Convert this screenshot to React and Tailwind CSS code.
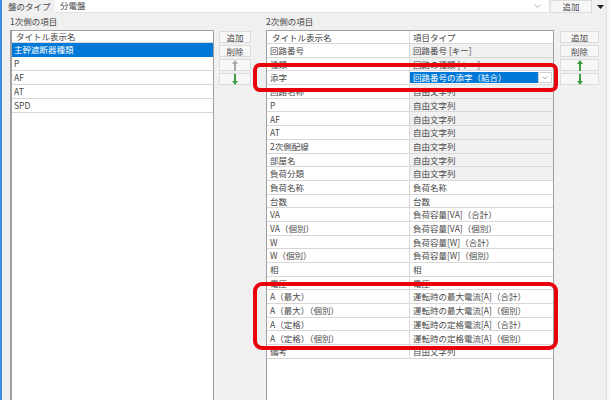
import React from 'react';

const leftRows = ['主幹遮断器種類', 'P', 'AF', 'AT', 'SPD'];

const rightRows = [
  { name: '回路番号', type: '回路番号 [キー]', gray: true },
  { name: '種類', type: '回路の種類 [キー]', gray: true },
  { name: '添字', combo: '回路番号の添字（結合）' },
  { name: '回路名称', type: '自由文字列', gray: true },
  { name: 'P', type: '自由文字列', gray: true },
  { name: 'AF', type: '自由文字列', gray: true },
  { name: 'AT', type: '自由文字列', gray: true },
  { name: '2次側配線', type: '自由文字列', gray: true },
  { name: '部屋名', type: '自由文字列', gray: true },
  { name: '負荷分類', type: '自由文字列', gray: true },
  { name: '負荷名称', type: '負荷名称' },
  { name: '台数', type: '台数' },
  { name: 'VA', type: '負荷容量[VA]（合計）' },
  { name: 'VA（個別）', type: '負荷容量[VA]（個別）' },
  { name: 'W', type: '負荷容量[W]（合計）' },
  { name: 'W（個別）', type: '負荷容量[W]（個別）' },
  { name: '相', type: '相' },
  { name: '電圧', type: '電圧' },
  { name: 'A（最大）', type: '運転時の最大電流[A]（合計）' },
  { name: 'A（最大）（個別）', type: '運転時の最大電流[A]（個別）' },
  { name: 'A（定格）', type: '運転時の定格電流[A]（合計）' },
  { name: 'A（定格）（個別）', type: '運転時の定格電流[A]（個別）' },
  { name: '備考', type: '自由文字列' },
];

const Arrow = ({ down, green }) => (
  <svg width="6" height="11" viewBox="0 0 6 11" className={down ? 'rotate-180' : ''}>
    <path d="M3 0 L6 4 H4 V11 H2 V4 H0 Z" className={green ? 'fill-[#3f9b3f]' : 'fill-[#a8a8a8]'} />
  </svg>
);

const Btn = ({ children }) => (
  <div className="flex h-[12px] items-center justify-center border border-[#dcdcdc] bg-[#f7f7f7]">
    {children}
  </div>
);

export default function App() {
  return (
    <div className="relative h-[400px] w-[610px] overflow-hidden border-l-2 border-[#3b8ee5] bg-[#f0f0f0] font-['Noto_Sans_CJK_JP',sans-serif] text-[8.5px] leading-none text-[#484848]">
      {/* top: panel type */}
      <div className="flex h-[13px] items-center">
        <span className="w-[53px] pl-[6px]">盤のタイプ</span>
        <div className="-mt-[1px] flex h-[13px] w-[493px] items-center border-b border-[#e2e2e2] bg-white">
          <span className="flex-1 pl-[5px]">分電盤</span>
          <svg width="7" height="4" viewBox="0 0 7 4" className="mr-[7px]">
            <path d="M0.5 0.5 L3.5 3.5 L6.5 0.5" fill="none" stroke="#a0a0a0" strokeWidth="0.8" />
          </svg>
        </div>
        <div className="-mt-[1px] ml-[2px] flex h-[13px] w-[42px] items-center justify-center border border-[#dcdcdc] bg-[#f7f7f7]">
          追加
        </div>
        <div className="flex w-[16px] justify-center">
          <svg width="7" height="4" viewBox="0 0 7 4">
            <path d="M0 0 H7 L3.5 4 Z" fill="#222" />
          </svg>
        </div>
      </div>

      {/* section labels */}
      <div className="flex h-[17px] items-center">
        <span className="w-[264px] pl-[8px]">1次側の項目</span>
        <span>2次側の項目</span>
      </div>

      <div className="flex pl-[8px]">
        {/* left list */}
        <div className="h-[370px] w-[204px] border border-l-2 border-[#a0a0a0] border-b-0 bg-white">
          <div className="flex h-[12px] items-center border-b border-[#d8d8d8] pl-[4px]">タイトル表示名</div>
          {leftRows.map((r, i) => (
            <div
              key={r}
              className={`flex h-[14px] items-center border-b pl-[2px] ${
                i === 0 ? 'border-[#0078d7] bg-[#0078d7] text-white' : 'border-[#d8d8d8]'
              }`}
            >
              {r}
            </div>
          ))}
        </div>

        <div className="ml-[5px] flex w-[32px] flex-col gap-[2px] pt-[1px]">
          <Btn>追加</Btn>
          <Btn>削除</Btn>
          <Btn><Arrow /></Btn>
          <Btn><Arrow down green /></Btn>
        </div>

        {/* right table */}
        <div className="ml-[15px] h-[370px] w-[288px] border border-[#a0a0a0] border-b-0 bg-white">
          <div className="flex h-[13px] border-b border-[#d8d8d8]">
            <div className="flex w-[143px] items-center border-r border-[#d8d8d8] pl-[5px]">タイトル表示名</div>
            <div className="flex flex-1 items-center pl-[3px]">項目タイプ</div>
          </div>
          {rightRows.map((r) => (
            <div key={r.name} className="flex h-[13.7px] border-b border-[#d8d8d8]">
              <div className="flex w-[143px] items-center border-r border-[#d8d8d8] pl-[3px]">{r.name}</div>
              {r.combo ? (
                <div className="flex flex-1 items-stretch py-[1px] pr-[1px]">
                  <div className="flex flex-1 items-center bg-[#0078d7] pl-[3px] text-white">{r.combo}</div>
                  <div className="flex w-[14px] items-center justify-center border border-[#d0d0d0] bg-white">
                    <svg width="6" height="4" viewBox="0 0 6 4">
                      <path d="M0.5 0.5 L3 3 L5.5 0.5" fill="none" stroke="#909090" strokeWidth="0.8" />
                    </svg>
                  </div>
                </div>
              ) : (
                <div className={`flex flex-1 items-center pl-[3px] ${r.gray ? 'bg-[#f0f0f0]' : ''}`}>{r.type}</div>
              )}
            </div>
          ))}
        </div>

        <div className="ml-[6px] flex w-[39px] flex-col gap-[2px] pt-[1px]">
          <Btn>追加</Btn>
          <Btn>削除</Btn>
          <Btn><Arrow green /></Btn>
          <Btn><Arrow down green /></Btn>
        </div>
      </div>

      {/* window edge */}
      <div className="absolute right-0 top-0 h-[400px] w-[4px] border-l border-[#e0e0e0] bg-[#f8f8f8]" />

      {/* highlight marks */}
      <div className="absolute left-[251px] top-[63px] h-[29px] w-[305px] rounded-[7px] border-4 border-[#e8000b]" />
      <div className="absolute left-[251px] top-[282px] h-[68px] w-[305px] rounded-[9px] border-4 border-[#e8000b]" />
    </div>
  );
}
